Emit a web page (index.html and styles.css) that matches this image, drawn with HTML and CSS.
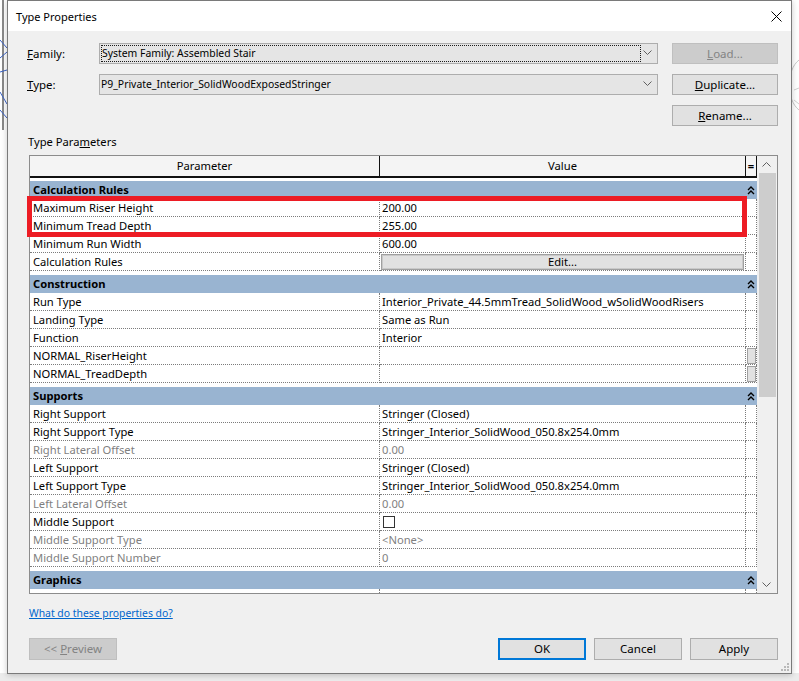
FILE: index.html
```html
<!DOCTYPE html>
<html>
<head>
<meta charset="utf-8">
<title>Type Properties</title>
<link rel="stylesheet" href="styles.css">
</head>
<body>
<div class="desk">
  <svg class="backdrop" width="799" height="681" viewBox="0 0 799 681">
    <line x1="3" y1="0" x2="3" y2="130" stroke="#8a8a8a" stroke-width="2"/>
    <path d="M0 40 L7 48 M0 58 L7 52 M0 92 L7 104 M0 72 L7 70 M0 110 L7 118" stroke="#3c64c8" stroke-width="1" fill="none"/>
    <path d="M799 60 C786 70 786 100 799 110" stroke="#c8c8c8" stroke-width="1" fill="none"/>
    <path d="M794 90 L799 88 M794 100 L799 104" stroke="#d0d0d0" stroke-width="1"/>
  </svg>
  <div class="dialog">
    <div class="titlebar">
      <span class="title">Type Properties</span>
      <svg class="close" width="11" height="11" viewBox="0 0 11 11"><path d="M0.5 0.5 L10.5 10.5 M10.5 0.5 L0.5 10.5" stroke="#000" stroke-width="1" fill="none"/></svg>
    </div>
    <div class="content">
      <div class="top">
        <div class="lbl"><u>F</u>amily:</div>
        <div class="combo fam">
          <span class="focus">System Family: Assembled Stair</span>
          <svg class="chev" width="9" height="5" viewBox="0 0 9 5"><path d="M0.5 0.5 L4.5 4.5 L8.5 0.5" stroke="#606060" fill="none"/></svg>
        </div>
        <div class="btn disabled"><u>L</u>oad...</div>
        <div class="lbl"><u>T</u>ype:</div>
        <div class="combo">
          <span class="ctext">P9_Private_Interior_SolidWoodExposedStringer</span>
          <svg class="chev" width="9" height="5" viewBox="0 0 9 5"><path d="M0.5 0.5 L4.5 4.5 L8.5 0.5" stroke="#606060" fill="none"/></svg>
        </div>
        <div class="btn"><u>D</u>uplicate...</div>
        <div class="spacer"></div>
        <div class="spacer"></div>
        <div class="btn"><u>R</u>ename...</div>
      </div>

      <div class="tp">Type Para<u>m</u>eters</div>

      <div class="tablewrap">
        <div class="table">
          <div class="grid">
            <div class="hrow">
              <div>Parameter</div>
              <div>Value</div>
              <div class="eqh">=</div>
            </div>

            <div class="g first"><div>Calculation Rules</div><div class="gi"><svg width="8" height="10" viewBox="0 0 8 10"><path d="M1 5 L4 2 L7 5 M1 9 L4 6 L7 9" stroke="#000" stroke-width="1.4" fill="none"/></svg></div></div>
            <div class="r"><div>Maximum Riser Height</div><div class="v">200.00</div><div></div></div>
            <div class="r"><div>Minimum Tread Depth</div><div class="v">255.00</div><div></div></div>
            <div class="r"><div>Minimum Run Width</div><div class="v">600.00</div><div></div></div>
            <div class="r"><div>Calculation Rules</div><div class="v bc"><div class="editbtn">Edit...</div></div><div></div></div>

            <div class="g"><div>Construction</div><div class="gi"><svg width="8" height="10" viewBox="0 0 8 10"><path d="M1 5 L4 2 L7 5 M1 9 L4 6 L7 9" stroke="#000" stroke-width="1.4" fill="none"/></svg></div></div>
            <div class="r"><div>Run Type</div><div class="v">Interior_Private_44.5mmTread_SolidWood_wSolidWoodRisers</div><div></div></div>
            <div class="r"><div>Landing Type</div><div class="v">Same as Run</div><div></div></div>
            <div class="r"><div>Function</div><div class="v">Interior</div><div></div></div>
            <div class="r"><div>NORMAL_RiserHeight</div><div class="v"></div><div class="bc"><div class="mini"></div></div></div>
            <div class="r"><div>NORMAL_TreadDepth</div><div class="v"></div><div class="bc"><div class="mini"></div></div></div>

            <div class="g"><div>Supports</div><div class="gi"><svg width="8" height="10" viewBox="0 0 8 10"><path d="M1 5 L4 2 L7 5 M1 9 L4 6 L7 9" stroke="#000" stroke-width="1.4" fill="none"/></svg></div></div>
            <div class="r"><div>Right Support</div><div class="v">Stringer (Closed)</div><div></div></div>
            <div class="r"><div>Right Support Type</div><div class="v">Stringer_Interior_SolidWood_050.8x254.0mm</div><div></div></div>
            <div class="r dis"><div>Right Lateral Offset</div><div class="v">0.00</div><div></div></div>
            <div class="r"><div>Left Support</div><div class="v">Stringer (Closed)</div><div></div></div>
            <div class="r"><div>Left Support Type</div><div class="v">Stringer_Interior_SolidWood_050.8x254.0mm</div><div></div></div>
            <div class="r dis"><div>Left Lateral Offset</div><div class="v">0.00</div><div></div></div>
            <div class="r"><div>Middle Support</div><div class="v"><div class="cb"></div></div><div></div></div>
            <div class="r dis"><div>Middle Support Type</div><div class="v">&lt;None&gt;</div><div></div></div>
            <div class="r dis"><div>Middle Support Number</div><div class="v">0</div><div></div></div>

            <div class="g"><div>Graphics</div><div class="gi"><svg width="8" height="10" viewBox="0 0 8 10"><path d="M1 5 L4 2 L7 5 M1 9 L4 6 L7 9" stroke="#000" stroke-width="1.4" fill="none"/></svg></div></div>
            <div class="r"><div></div><div class="v"></div><div></div></div>
          </div>
          <div class="scroll">
            <div class="sbtn"><svg width="9" height="5" viewBox="0 0 9 5"><path d="M0.5 4.5 L4.5 0.5 L8.5 4.5" stroke="#606060" fill="none"/></svg></div>
            <div class="thumb"></div>
            <div class="strack"></div>
            <div class="sbtn"><svg width="9" height="5" viewBox="0 0 9 5"><path d="M0.5 0.5 L4.5 4.5 L8.5 0.5" stroke="#606060" fill="none"/></svg></div>
          </div>
        </div>
        <div class="redbox"></div>
      </div>

      <div class="linkrow"><a class="link" href="#">What do these properties do?</a></div>

      <div class="bottom">
        <div class="btn big disabled prev">&lt;&lt; <u>P</u>review</div>
        <div class="btn big ok">OK</div>
        <div class="btn big">Cancel</div>
        <div class="btn big">Apply</div>
      </div>
    </div>
    <svg class="grip" width="9" height="9" viewBox="0 0 9 9">
      <rect x="6" y="0" width="2" height="2" fill="#b8b8b8"/>
      <rect x="3" y="3" width="2" height="2" fill="#b8b8b8"/>
      <rect x="6" y="3" width="2" height="2" fill="#b8b8b8"/>
      <rect x="0" y="6" width="2" height="2" fill="#b8b8b8"/>
      <rect x="3" y="6" width="2" height="2" fill="#b8b8b8"/>
      <rect x="6" y="6" width="2" height="2" fill="#b8b8b8"/>
    </svg>
  </div>
</div>
</body>
</html>
```

FILE: styles.css
```css
html, body {
  margin: 0;
  padding: 0;
}
body {
  font-family: "Noto Sans", "Open Sans", sans-serif;
  font-size: 11.2px;
  color: #000;
  background: #fff;
}
.desk {
  position: relative;
  width: 799px;
  height: 681px;
  overflow: hidden;
  padding-left: 7px;
  box-sizing: border-box;
  background: linear-gradient(to bottom, #ffffff 0, #ffffff 673px, #ececec 673px);
}
.backdrop {
  position: absolute;
  left: 0;
  top: 0;
}
.dialog {
  position: relative;
  width: 785px;
  height: 674px;
  box-sizing: border-box;
  border: 1px solid #7a7a7a;
  background: #f0f0f0;
  box-shadow: 0 1px 6px rgba(0, 0, 0, 0.22);
  display: flex;
  flex-direction: column;
}
.titlebar {
  height: 30px;
  flex: none;
  background: #fff;
  display: flex;
  align-items: center;
  justify-content: space-between;
  padding: 0 9px 0 8px;
}
.title {
  font-size: 11px;
}
.close {
  display: block;
}
.content {
  flex: 1;
  padding: 12px 13px 12px 21px;
  display: flex;
  flex-direction: column;
}
.top {
  display: grid;
  grid-template-columns: 70px 573px 106px;
  grid-auto-rows: 21px;
  row-gap: 10px;
  font-size: 11.5px;
}
.lbl {
  margin-left: -2px;
  line-height: 21px;
}
.combo {
  margin-right: 14px;
  border: 1px solid #adadad;
  background: #e5e5e5;
  box-sizing: border-box;
  display: flex;
  align-items: center;
  justify-content: space-between;
  padding: 0 5px 0 0;
  white-space: nowrap;
  font-size: 10.4px;
}
.focus {
  width: 540px;
  height: 17px;
  box-sizing: border-box;
  border: 1px dotted #1a1a1a;
  line-height: 15px;
  padding-left: 0;
  margin-left: 1px;
}
.ctext {
  padding-left: 1px;
  line-height: 19px;
}
.chev {
  display: block;
  margin-top: -2px;
}
.btn {
  border: 1px solid #adadad;
  background: #e1e1e1;
  box-sizing: border-box;
  text-align: center;
  line-height: 19px;
  white-space: nowrap;
}
.btn.disabled {
  background: #cccccc;
  border-color: #bfbfbf;
  color: #838383;
}
.tp {
  margin-top: 8px;
  line-height: 16px;
  margin-left: -1px;
}
.tablewrap {
  position: relative;
  margin-top: 5px;
  height: 439px;
  flex: none;
}
.table {
  display: flex;
  height: 100%;
  box-sizing: border-box;
  border: 1px solid #8c8c8c;
  background: #fff;
  overflow: hidden;
}
.grid {
  width: 727px;
  flex: none;
}
.hrow {
  display: grid;
  grid-template-columns: 350px 366px 11px;
  height: 22px;
  box-sizing: border-box;
  border-bottom: 2px solid #111;
  background: #f4f4f4;
}
.hrow > div {
  border-right: 1px solid #111;
  text-align: center;
  line-height: 20px;
}
.eqh {
  font-weight: bold;
}
.g {
  display: grid;
  grid-template-columns: 716px 11px;
  height: 18px;
  margin-top: 4px;
  background: #99b4d1;
  font-weight: bold;
  line-height: 18px;
}
.g.first {
  margin-top: 3px;
}
.g > div:first-child {
  padding-left: 3px;
}
.gi {
  display: flex;
  align-items: center;
  justify-content: center;
  padding-right: 1px;
}
.gi svg {
  display: block;
}
.r {
  display: grid;
  grid-template-columns: 350px 366px 11px;
  height: 18px;
}
.r > div {
  border-right: 1px dotted #7c7c7c;
  border-bottom: 1px dotted #7c7c7c;
  box-sizing: border-box;
  line-height: 18px;
  padding-left: 3px;
  white-space: nowrap;
  overflow: hidden;
}
.r > div.v {
  padding-left: 2px;
}
.r.dis {
  color: #7f7f7f;
}
.r > div.bc {
  padding: 1px 1px 0 1px;
}
.editbtn {
  height: 16px;
  box-sizing: border-box;
  border: 1px solid #a0a0a0;
  box-shadow: inset 0 0 0 1px #c9c9c9;
  background: #e1e1e1;
  text-align: center;
  line-height: 14px;
  color: #000;
}
.mini {
  width: 9px;
  height: 16px;
  box-sizing: border-box;
  border: 1px solid #a0a0a0;
  background: #e1e1e1;
}
.cb {
  width: 12px;
  height: 12px;
  margin-top: 3px;
  margin-left: 1px;
  box-sizing: border-box;
  border: 1px solid #333;
  background: #fff;
}
.scroll {
  width: 20px;
  flex: none;
  background: #f0f0f0;
  display: flex;
  flex-direction: column;
}
.sbtn {
  height: 17px;
  flex: none;
  display: flex;
  align-items: center;
  justify-content: center;
  padding-right: 1px;
}
.sbtn svg {
  display: block;
}
.thumb {
  height: 224px;
  flex: none;
  width: 17px;
  margin-left: 2px;
  background: #cdcdcd;
}
.strack {
  flex: 1;
}
.redbox {
  position: absolute;
  left: -2px;
  top: 41px;
  width: 720px;
  height: 41px;
  box-sizing: border-box;
  border: 5px solid #ed1c24;
  pointer-events: none;
}
.linkrow {
  margin-top: 11px;
  line-height: 16px;
}
.link {
  color: #0066cc;
  text-decoration: underline;
  font-size: 10.4px;
}
.bottom {
  margin-top: 17px;
  display: flex;
  gap: 8px;
  font-size: 11.5px;
}
.btn.big {
  width: 88px;
  height: 22px;
  line-height: 20px;
}
.prev {
  margin-right: auto;
}
.btn.ok {
  border: 2px solid #0078d7;
  line-height: 18px;
}
.grip {
  position: absolute;
  right: 1px;
  bottom: 1px;
}
```
